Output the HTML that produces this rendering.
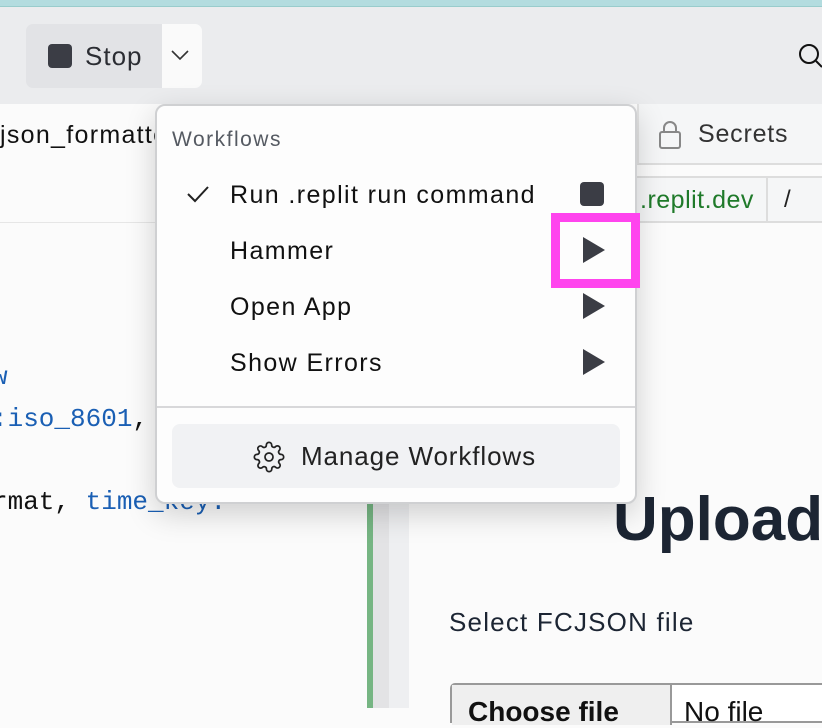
<!DOCTYPE html>
<html><head><style>
*{margin:0;padding:0;box-sizing:border-box}
body{width:822px;height:708px;overflow:hidden;position:relative;background:#fbfbfb;font-family:"Liberation Sans",sans-serif;color:#111}
.a{position:absolute;white-space:nowrap}
.mono{font-family:"Liberation Mono",monospace;font-size:26px;white-space:nowrap}
.it{font-size:25px;letter-spacing:1.4px}
</style></head><body>
<div class="a" style="left:0;top:0;width:822px;height:7px;background:#b3dcdf;border-bottom:1px solid #9cc"></div>
<div class="a" style="left:0;top:7px;width:822px;height:97px;background:#ebecee"></div>
<div class="a" style="left:26px;top:24px;width:136px;height:64px;background:#e2e3e6;border-radius:7px 0 0 7px"></div>
<div class="a" style="left:162px;top:24px;width:40px;height:64px;background:#fafafa;border-radius:0 7px 7px 0"></div>
<div class="a" style="left:48px;top:44px;width:24px;height:24px;background:#3b3d45;border-radius:4px"></div>
<div class="a" style="left:85px;top:41px;font-size:26px;color:#2b2d33;letter-spacing:1px">Stop</div>
<svg class="a" style="left:170px;top:48px" width="20" height="14"><path d="M2 3l8 8 8-8" fill="none" stroke="#333" stroke-width="1.6"/></svg>
<svg class="a" style="left:795px;top:42px" width="27" height="30"><circle cx="14" cy="12" r="9" fill="none" stroke="#111" stroke-width="2"/><path d="M21 19l6 6" stroke="#111" stroke-width="2"/></svg>
<!-- left panel -->
<div class="a" style="left:0;top:121px;font-size:25px;color:#111;letter-spacing:1.3px">json_formatter</div>
<div class="a" style="left:0;top:222px;width:370px;height:1px;background:#e6e6e6"></div>
<div class="a mono" style="left:-8px;top:362px;color:#1a5fb4">w</div>
<div class="a mono" style="left:-8px;top:404px;color:#1a5fb4">:iso_8601<span style="color:#111">,</span></div>
<div class="a mono" style="left:-8px;top:487px;color:#111">rmat, <span style="color:#1a5fb4">time_key.</span></div>
<div class="a" style="left:367px;top:150px;width:6px;height:558px;background:#76b583"></div>
<div class="a" style="left:373px;top:150px;width:16px;height:558px;background:#e3e3e5"></div>
<div class="a" style="left:389px;top:150px;width:20px;height:558px;background:#eeeff1"></div>
<!-- right -->
<div class="a" style="left:637px;top:104px;width:185px;height:61px;background:#f5f6f7;border-left:2px solid #e3e3e3;border-bottom:2px solid #ddd"></div>
<svg class="a" style="left:658px;top:120px" width="24" height="30"><rect x="2" y="12" width="20" height="16" rx="2" fill="none" stroke="#888" stroke-width="2"/><path d="M6 12V8a6 6 0 0 1 12 0v4" fill="none" stroke="#888" stroke-width="2"/></svg>
<div class="a" style="left:698px;top:120px;font-size:25px;color:#333;letter-spacing:0.8px">Secrets</div>
<div class="a" style="left:630px;top:176px;width:192px;height:47px;background:#f5f6f7;border-top:2px solid #ddd;border-bottom:2px solid #ddd"></div>
<div class="a" style="left:766px;top:176px;width:2px;height:47px;background:#ddd"></div>
<div class="a" style="left:640px;top:186px;font-size:25px;color:#1f7a2a;letter-spacing:0.5px">.replit.dev</div>
<div class="a" style="left:784px;top:186px;font-size:24px;color:#222">/</div>
<div class="a" style="left:613px;top:484px;font-size:62px;font-weight:bold;color:#1c2533">Upload</div>
<div class="a" style="left:449px;top:607px;font-size:26px;color:#1c2533;letter-spacing:1.2px">Select FCJSON file</div>
<div class="a" style="left:450px;top:683px;width:380px;height:40px;border:2px solid #999;border-radius:5px 0 0 0;background:#fff"></div>
<div class="a" style="left:452px;top:685px;width:220px;height:40px;background:#efefef;border-right:2px solid #999"></div>
<div class="a" style="left:468px;top:696px;font-size:28px;color:#111;font-weight:bold">Choose file</div>
<div class="a" style="left:684px;top:696px;font-size:28px;color:#111">No file</div>
<!-- menu -->
<div class="a" style="left:155px;top:104px;width:482px;height:400px;background:#fdfdfd;border:2px solid #cfd0d2;border-radius:10px;box-shadow:0 10px 30px rgba(0,0,0,.18)"></div>
<div class="a" style="left:172px;top:128px;font-size:21px;color:#555a62;letter-spacing:1.5px">Workflows</div>
<svg class="a" style="left:186px;top:184px" width="24" height="20"><path d="M2 10l7 7L22 3" fill="none" stroke="#222" stroke-width="2"/></svg>
<div class="a it" style="left:230px;top:181px">Run .replit run command</div>
<div class="a" style="left:580px;top:182px;width:24px;height:24px;background:#3b3d45;border-radius:4px"></div>
<div class="a it" style="left:230px;top:237px">Hammer</div>
<div class="a it" style="left:230px;top:293px">Open App</div>
<div class="a it" style="left:230px;top:349px">Show Errors</div>
<svg class="a" style="left:582px;top:237px" width="24" height="26"><path d="M1 0L23 13L1 26Z" fill="#3b3d45"/></svg>
<svg class="a" style="left:582px;top:293px" width="24" height="26"><path d="M1 0L23 13L1 26Z" fill="#3b3d45"/></svg>
<svg class="a" style="left:582px;top:349px" width="24" height="26"><path d="M1 0L23 13L1 26Z" fill="#3b3d45"/></svg>
<div class="a" style="left:157px;top:406px;width:478px;height:2px;background:#d8d8da"></div>
<div class="a" style="left:172px;top:424px;width:448px;height:64px;background:#f1f2f4;border-radius:8px"></div>
<svg class="a" style="left:253px;top:441px" width="32" height="32" viewBox="0 0 24 24"><path d="M12 15a3 3 0 1 0 0-6 3 3 0 0 0 0 6z" fill="none" stroke="#222" stroke-width="1.3"/><path d="M19.4 15a1.650 1.650 0 0 0 .33 1.820l.06.06a2 2 0 1 1-2.830 2.830l-.06-.06a1.650 1.650 0 0 0-1.820-.33 1.650 1.650 0 0 0-1 1.510V21a2 2 0 1 1-4 0v-.09A1.650 1.650 0 0 0 9 19.4a1.650 1.650 0 0 0-1.820.33l-.06.06a2 2 0 1 1-2.830-2.830l.06-.06A1.650 1.650 0 0 0 4.680 15a1.650 1.650 0 0 0-1.510-1H3a2 2 0 1 1 0-4h.09A1.650 1.650 0 0 0 4.600 9a1.650 1.650 0 0 0-.33-1.820l-.06-.06a2 2 0 1 1 2.830-2.830l.06.06A1.650 1.650 0 0 0 9 4.680a1.650 1.650 0 0 0 1-1.510V3a2 2 0 1 1 4 0v.09a1.650 1.650 0 0 0 1 1.510 1.650 1.650 0 0 0 1.820-.33l.06-.06a2 2 0 1 1 2.830 2.830l-.06.06A1.650 1.650 0 0 0 19.4 9a1.650 1.650 0 0 0 1.510 1H21a2 2 0 1 1 0 4h-.09a1.650 1.650 0 0 0-1.510 1z" fill="none" stroke="#222" stroke-width="1.3"/></svg>
<div class="a" style="left:301px;top:441px;font-size:26px;color:#222;letter-spacing:0.9px">Manage Workflows</div>
<div class="a" style="left:551px;top:213px;width:89px;height:75px;border:9px solid #ff44ee"></div>
</body></html>
